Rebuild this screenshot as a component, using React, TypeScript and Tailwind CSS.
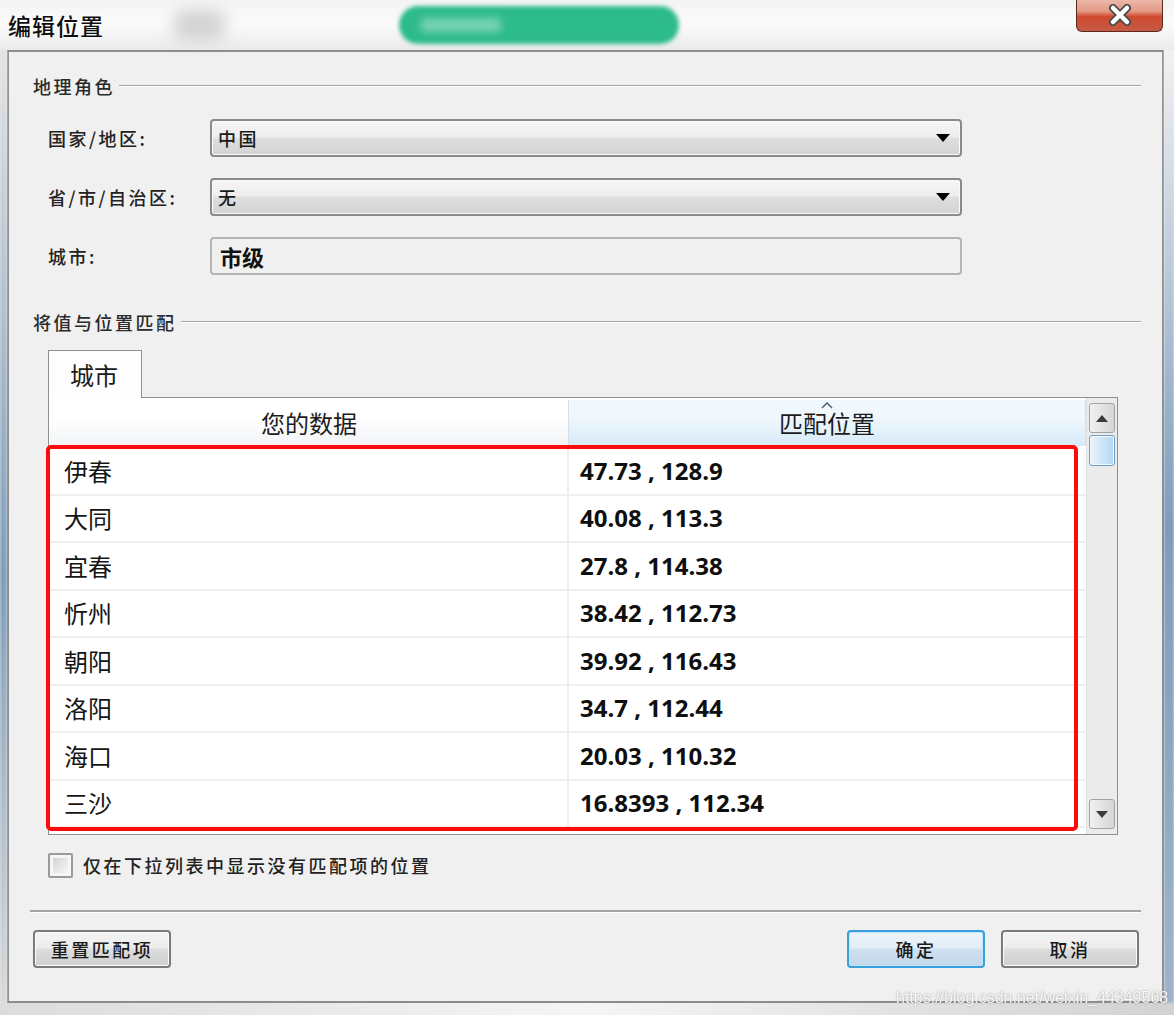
import React from "react";

const rows: [string, string][] = [
  ["伊春", "47.73 , 128.9"],
  ["大同", "40.08 , 113.3"],
  ["宜春", "27.8 , 114.38"],
  ["忻州", "38.42 , 112.73"],
  ["朝阳", "39.92 , 116.43"],
  ["洛阳", "34.7 , 112.44"],
  ["海口", "20.03 , 110.32"],
  ["三沙", "16.8393 , 112.34"],
];

function GroupTitle({ text }: { text: string }) {
  return (
    <div className="flex items-center h-[24px]">
      <span className="text-[18px] tracking-[2.5px] text-[#2a2a2a] font-medium">{text}</span>
      <div className="ml-[4px] flex-1 border-t border-t-[#a6a6a6] border-b border-b-white" />
    </div>
  );
}

function Caret() {
  return (
    <svg width="14" height="8" viewBox="0 0 14 8">
      <polygon points="0,0 14,0 7,8" fill="#000" />
    </svg>
  );
}

function Combo({ value }: { value: string }) {
  return (
    <div className="w-[752px] h-[38px] rounded-[4px] border-2 border-[#8a8a8a] bg-[linear-gradient(#f5f5f5,#eeeeee_46%,#dedede_52%,#d3d3d3)] flex items-center pl-[6px] pr-[10px] shadow-[inset_0_0_0_1px_#fafafa]">
      <span className="flex-1 text-[18px] tracking-[2.5px] text-[#1a1a1a] font-medium">{value}</span>
      <Caret />
    </div>
  );
}

function FormRow({ label, children }: { label: string; children: React.ReactNode }) {
  return (
    <div className="flex items-center pl-[15px]">
      <span className="w-[162px] text-[18px] tracking-[2.5px] text-[#222] font-medium">{label}</span>
      {children}
    </div>
  );
}

function Button({ text, primary }: { text: string; primary?: boolean }) {
  const look = primary
    ? "border-[#3aa0dc] bg-[linear-gradient(#eef5fb,#e3edf6_46%,#cfe0ee_52%,#c3d8ea)] shadow-[inset_0_0_0_1px_#bfe6fb]"
    : "border-[#7a7a7a] bg-[linear-gradient(#f4f4f4,#ececec_46%,#dcdcdc_52%,#cfcfcf)] shadow-[inset_0_0_0_1px_#fbfbfb]";
  return (
    <div className={`w-[138px] h-[38px] rounded-[4px] border-2 flex items-center justify-center ${look}`}>
      <span className="text-[18px] tracking-[2.5px] text-[#1a1a1a] font-medium">{text}</span>
    </div>
  );
}

function ScrollButton({ up }: { up?: boolean }) {
  return (
    <div className="mx-[2px] h-[30px] rounded-[3px] border border-[#a2a2a2] bg-[linear-gradient(90deg,#f2f2f2,#e3e3e3_50%,#d6d6d6)] flex items-center justify-center">
      <svg width="12" height="7" viewBox="0 0 12 7">
        {up ? <polygon points="0,7 12,7 6,0" fill="#3a3a3a" /> : <polygon points="0,0 12,0 6,7" fill="#3a3a3a" />}
      </svg>
    </div>
  );
}

export default function App() {
  return (
    <div className="relative w-[1174px] h-[1015px] overflow-hidden bg-[#e9e9e9] font-['Noto_Sans_CJK_SC',sans-serif]">
      {/* title bar over blurred glass */}
      <div className="h-[50px] flex items-center bg-linear-to-b from-[#f4f4f4] via-[#fbfbfb] to-[#eaeaea]">
        <span className="pl-[8px] text-[23px] tracking-[1px] text-[#0e0e0e] font-medium [text-shadow:0_0_3px_#ffffff]">编辑位置</span>
        <div className="ml-[68px] w-[55px] h-[30px] rounded-full bg-[#b9b9b9] blur-[8px] opacity-60" />
        <div className="ml-[172px] w-[280px] h-[38px] rounded-full bg-[#2ebb8b] blur-[2px] flex items-center pl-[22px]">
          <div className="w-[80px] h-[14px] rounded-[3px] bg-white/35 blur-[3px]" />
        </div>
        <div className="ml-auto mr-[11px] self-start -mt-px w-[87px] h-[33px] rounded-b-[6px] border border-t-0 border-[#5d2a20] bg-[linear-gradient(#ecb9ab,#e39a85_38%,#cf4a2f_55%,#c65a46)] flex items-center justify-center">
          <svg width="26" height="22" viewBox="0 0 26 22">
            <path d="M6 4 L20 18 M20 4 L6 18" stroke="#4b4b4b" strokeWidth="8" strokeLinecap="round" />
            <path d="M6 4 L20 18 M20 4 L6 18" stroke="#ffffff" strokeWidth="4.5" strokeLinecap="round" />
          </svg>
        </div>
      </div>

      <div className="flex h-[953px]">
        <div className="w-[7px] bg-linear-to-b from-[#e4e4e4] via-[#7e9fba] via-55% to-[#dadada] blur-[1px]" />

        {/* dialog body */}
        <div className="w-[1157px] border-2 border-[#8c8c8c] bg-[#f0f0f0] pl-[24px] pr-[21px] pt-[22px]">
          <GroupTitle text="地理角色" />
          <div className="mt-[21px] flex flex-col gap-[21px]">
            <FormRow label="国家/地区:">
              <Combo value="中国" />
            </FormRow>
            <FormRow label="省/市/自治区:">
              <Combo value="无" />
            </FormRow>
            <FormRow label="城市:">
              <div className="w-[752px] h-[38px] rounded-[4px] border-2 border-[#b4b4b4] bg-[#f0f0f0] flex items-center pl-[8px]">
                <span className="text-[22px] font-bold text-[#111]">市级</span>
              </div>
            </FormRow>
          </div>

          <div className="mt-[35px]">
            <GroupTitle text="将值与位置匹配" />
          </div>

          <div className="mt-[16px] ml-[15px] relative z-10 w-[94px] h-[48px] -mb-px border border-b-0 border-[#8e8f8f] bg-[#fdfdfd] flex items-center pl-[21px]">
            <span className="text-[24px] text-[#1a1a1a]">城市</span>
          </div>

          {/* table with scrollbar */}
          <div className="relative ml-[15px] w-[1070px] h-[438px] border border-[#8e8f8f] bg-white flex pl-px">
            <div className="w-[1036px] pt-[2px] flex flex-col">
              <div className="h-[46px] flex">
                <div className="w-[519px] bg-linear-to-b from-white from-40% to-[#f1f3f5] border-r border-[#d6dee6] flex items-center justify-center">
                  <span className="text-[24px] text-[#1c1c1c]">您的数据</span>
                </div>
                <div className="relative w-[517px] bg-linear-to-b from-[#f1f8fd] from-35% to-[#d5eaf8] border-r border-[#cfe3f1] flex items-center justify-center">
                  <svg className="absolute left-[252px] top-[2px]" width="12" height="7" viewBox="0 0 12 7">
                    <polyline points="1,6 6,1 11,6" fill="none" stroke="#56697a" strokeWidth="1.6" />
                  </svg>
                  <span className="text-[24px] text-[#1c1c1c]">匹配位置</span>
                </div>
              </div>
              <div className="mt-[2px]">
                {rows.map(([city, pos]) => (
                  <div key={city} className="h-[47.5px] flex border-b-2 border-[#efefef]">
                    <div className="w-[519px] border-r-2 border-[#efefef] flex items-center pl-[14px]">
                      <span className="text-[24px] text-[#151515]">{city}</span>
                    </div>
                    <div className="flex-1 flex items-center pl-[11px]">
                      <span className="text-[24px] font-bold text-[#0f0f0f] font-['Open_Sans','Noto_Sans_CJK_SC',sans-serif]">{pos}</span>
                    </div>
                  </div>
                ))}
              </div>
            </div>

            <div className="w-[32px] bg-[#ebebeb] border-l border-[#e2e2e2] flex flex-col pt-[5px] pb-[5px]">
              <ScrollButton up />
              <div className="mt-[2px] mx-[2px] h-[31px] rounded-[3px] border border-[#6f9fc8] bg-[linear-gradient(90deg,#e9f4fc,#cfe6f8_50%,#b4d5f0)] shadow-[inset_0_0_0_1px_#f2f9fe]" />
              <div className="mt-auto">
                <ScrollButton />
              </div>
            </div>

            <div className="absolute left-[-3px] top-[47px] w-[1032px] h-[386px] rounded-[5px] border-4 border-[#ff0a0a] pointer-events-none" />
          </div>

          <div className="mt-[18px] ml-[15px] flex items-center h-[25px]">
            <div className="w-[25px] h-[25px] rounded-[2px] border-2 border-[#9a9a9a] bg-[#f6f6f6] p-[3px]">
              <div className="w-full h-full bg-linear-to-br from-[#d4d4d4] to-[#f7f7f7]" />
            </div>
            <span className="ml-[10px] text-[18px] tracking-[2.5px] text-[#222] font-medium">仅在下拉列表中显示没有匹配项的位置</span>
          </div>

          <div className="mt-[32px] -ml-[3px] border-t-2 border-t-[#a4a4a4] border-b border-b-white" />

          <div className="mt-[17px] flex items-center">
            <Button text="重置匹配项" />
            <div className="ml-auto mr-[2px] flex gap-[16px]">
              <Button text="确定" primary />
              <Button text="取消" />
            </div>
          </div>
        </div>

        <div className="flex-1 bg-linear-to-b from-[#f2f2f2] via-[#7d9cbd] via-50% to-[#9fb4c9] blur-[1px]" />
      </div>

      <div className="h-[12px] bg-linear-to-r from-[#dcdcdc] via-[#f5f5f5] to-[#d2d2d2]" />

      <span className="absolute left-[896px] top-[986px] text-[16px] text-white/90 font-['Liberation_Sans',sans-serif] [text-shadow:0_0_2px_#8a8a8a] blur-[0.6px]">
        https://blog.csdn.net/weixin_44349568
      </span>
    </div>
  );
}
